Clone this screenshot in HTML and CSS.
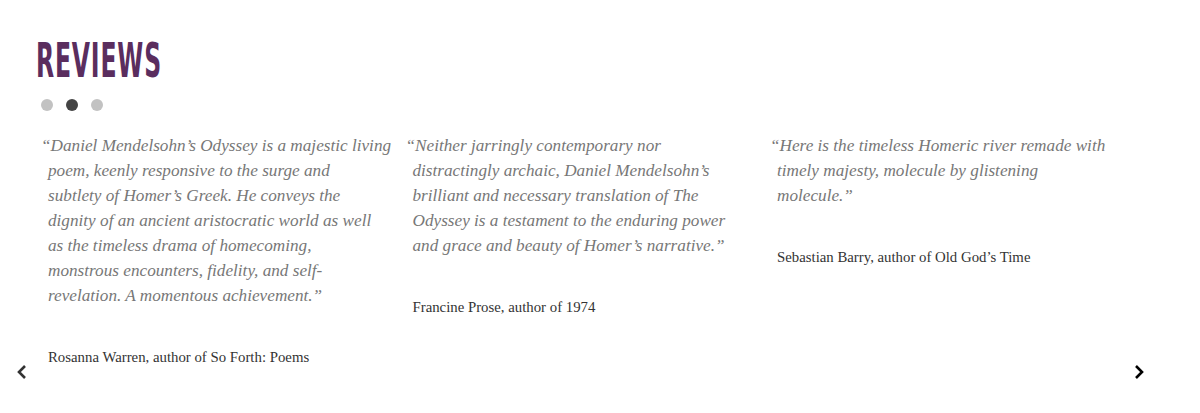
FILE: index.html
```html
<!DOCTYPE html>
<html lang="en">
<head>
<meta charset="utf-8">
<title>Reviews</title>
<link rel="stylesheet" href="styles.css">
</head>
<body>
<section class="reviews">
  <h2 class="title"><span class="title-text">REVIEWS</span></h2>
  <div class="dots">
    <span class="dot"></span>
    <span class="dot active"></span>
    <span class="dot"></span>
  </div>
  <div class="slider">
    <div class="slide">
      <p class="quote">“Daniel Mendelsohn’s Odyssey is a majestic living<br>poem, keenly responsive to the surge and<br>subtlety of Homer’s Greek. He conveys the<br>dignity of an ancient aristocratic world as well<br>as the timeless drama of homecoming,<br>monstrous encounters, fidelity, and self-<br>revelation. A momentous achievement.”</p>
      <p class="author">Rosanna Warren, author of So Forth: Poems</p>
    </div>
    <div class="slide">
      <p class="quote">“Neither jarringly contemporary nor<br>distractingly archaic, Daniel Mendelsohn’s<br>brilliant and necessary translation of The<br>Odyssey is a testament to the enduring power<br>and grace and beauty of Homer’s narrative.”</p>
      <p class="author">Francine Prose, author of 1974</p>
    </div>
    <div class="slide">
      <p class="quote">“Here is the timeless Homeric river remade with<br>timely majesty, molecule by glistening<br>molecule.”</p>
      <p class="author">Sebastian Barry, author of Old God’s Time</p>
    </div>
  </div>
  <button class="arrow prev" aria-label="Previous">
    <svg width="12" height="16" viewBox="0 0 12 16"><path d="M9 2 L3 8 L9 14" fill="none" stroke="currentColor" stroke-width="2.6"/></svg>
  </button>
  <button class="arrow next" aria-label="Next">
    <svg width="12" height="16" viewBox="0 0 12 16"><path d="M3 2 L9 8 L3 14" fill="none" stroke="currentColor" stroke-width="2.6"/></svg>
  </button>
</section>
</body>
</html>
```
FILE: styles.css
```css
html, body {
  margin: 0;
  padding: 0;
  background: #ffffff;
}
body {
  font-family: "Liberation Serif", serif;
  width: 1200px;
  height: 413px;
  overflow: hidden;
}
.reviews {
  position: relative;
  height: 413px;
  padding-top: 36px;
  box-sizing: border-box;
}
.title {
  margin: 0 0 0 36px;
  font-family: "DejaVu Sans Condensed", "Liberation Sans Narrow", "DejaVu Sans", sans-serif;
  font-weight: bold;
  font-size: 48px;
  line-height: 48px;
  color: #5a2d5e;
  height: 48px;
}
.title-text {
  display: inline-block;
  transform: scaleX(0.545);
  transform-origin: left center;
  letter-spacing: 1.5px;
}
.dots {
  display: flex;
  gap: 13px;
  margin: 15px 0 0 41px;
}
.dot {
  width: 12px;
  height: 12px;
  border-radius: 50%;
  background: #c2c2c2;
}
.dot.active {
  background: #444444;
}
.slider {
  display: grid;
  grid-template-columns: repeat(3, 345px);
  column-gap: 19.5px;
  padding-left: 41px;
  margin-top: 22px;
}
.slide {
  min-width: 0;
}
.quote {
  margin: 0;
  font-style: italic;
  font-size: 17.2px;
  line-height: 25px;
  color: #777777;
  padding-left: 7px;
  text-indent: -7px;
  white-space: nowrap;
}
.author {
  margin: 37px 0 0 7px;
  font-size: 14.8px;
  line-height: 25px;
  color: #333333;
}
.arrow {
  position: absolute;
  top: 364px;
  border: 0;
  background: none;
  padding: 0;
  width: 12px;
  height: 16px;
  cursor: pointer;
}
.arrow svg { display: block; }
.prev { left: 16px; color: #333333; }
.next { left: 1133px; color: #000000; }
```
